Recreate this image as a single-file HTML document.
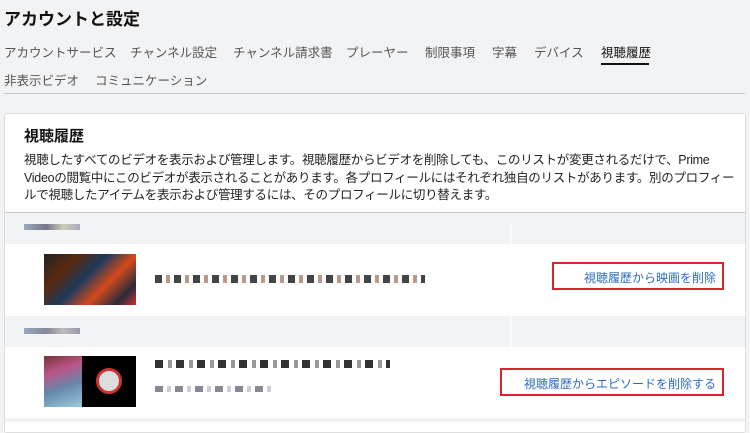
<!DOCTYPE html>
<html><head><meta charset="utf-8"><style>
*{margin:0;padding:0;box-sizing:border-box}
body{width:750px;height:422px;overflow:hidden;background:#f2f3f5;font-family:"Liberation Sans","Noto Sans CJK JP",sans-serif;color:#111;position:relative}
.a{position:absolute;white-space:nowrap}
.tab{font-size:12.5px;color:#555;top:42px}
.tab2{top:70px}
.blk{position:absolute;height:9px}
</style></head><body>
<div class="a" style="left:4px;top:5px;font-size:17px;font-weight:bold">アカウントと設定</div>
<div class="a tab" style="left:4px">アカウントサービス</div>
<div class="a tab" style="left:130px">チャンネル設定</div>
<div class="a tab" style="left:233px">チャンネル請求書</div>
<div class="a tab" style="left:346px">プレーヤー</div>
<div class="a tab" style="left:425px">制限事項</div>
<div class="a tab" style="left:492px">字幕</div>
<div class="a tab" style="left:534px">デバイス</div>
<div class="a tab" style="left:601px;color:#111">視聴履歴</div>
<div class="a" style="left:601px;top:63px;width:48px;height:2px;background:#111"></div>
<div class="a tab tab2" style="left:4px">非表示ビデオ</div>
<div class="a tab tab2" style="left:95px">コミュニケーション</div>
<div class="a" style="left:4px;top:93px;width:741px;height:1px;background:#ccc"></div>

<div class="a" style="left:4px;top:113px;width:742px;height:320px;background:#fff;border:1px solid #ddd;border-radius:3px"></div>
<div class="a" style="left:24px;top:125px;font-size:15px;font-weight:bold">視聴履歴</div>
<div class="a" style="left:24px;top:152px;font-size:12.5px;line-height:17.5px;color:#222;letter-spacing:-0.3px">視聴したすべてのビデオを表示および管理します。視聴履歴からビデオを削除しても、このリストが変更されるだけで、Prime<br>Videoの閲覧中にこのビデオが表示されることがあります。各プロフィールにはそれぞれ独自のリストがあります。別のプロフィー<br>ルで視聴したアイテムを表示および管理するには、そのプロフィールに切り替えます。</div>

<div class="a" style="left:5px;top:212px;width:740px;height:1px;background:#ccc"></div>
<div class="a" style="left:5px;top:213px;width:740px;height:31px;background:#f2f3f5"></div>
<div class="a" style="left:510px;top:223px;width:2px;height:21px;background:#fafafa"></div>
<div class="blk" style="left:24px;top:224px;width:56px;height:6px;background:linear-gradient(90deg,#9ab 0,#778 40%,#ccb 70%,#aab)"></div>
<div class="a" style="left:5px;top:316px;width:740px;height:31px;background:#f2f3f5"></div>
<div class="a" style="left:510px;top:316px;width:2px;height:31px;background:#fafafa"></div>
<div class="blk" style="left:24px;top:328px;width:56px;height:6px;background:linear-gradient(90deg,#9ab 0,#889 40%,#bbb 70%,#99a)"></div>
<div class="a" style="left:5px;top:418px;width:740px;height:4px;background:#f2f3f5"></div>

<div class="a" style="left:44px;top:254px;width:92px;height:51px;background:linear-gradient(135deg,#222 0,#5a2a10 25%,#1d3a5a 45%,#d44a1c 65%,#2a2a3a 85%,#c33 100%)"></div>
<div class="blk" style="left:155px;top:275px;width:270px;height:8px;background:repeating-linear-gradient(90deg,#444 0 7px,#fff 7px 11px,#b98 11px 15px,#fff 15px 19px)"></div>
<div class="a" style="left:552px;top:262px;width:172px;height:28px;border:2px solid #d9232e"></div>
<div class="a" style="left:552px;top:269px;width:164px;text-align:right;font-size:12px;color:#2e6cc0">視聴履歴から映画を削除</div>

<div class="a" style="left:44px;top:356px;width:38px;height:51px;background:linear-gradient(160deg,#733 0,#b58 30%,#68a 60%,#9cd 100%)"></div>
<div class="a" style="left:82px;top:356px;width:54px;height:51px;background:#000"><div style="position:absolute;left:14px;top:12px;width:26px;height:26px;border-radius:50%;background:#ddd;border:3px solid #c33"></div></div>
<div class="blk" style="left:155px;top:360px;width:235px;height:8px;background:repeating-linear-gradient(90deg,#333 0 8px,#fff 8px 13px,#999 13px 17px,#fff 17px 21px)"></div>
<div class="blk" style="left:155px;top:386px;width:120px;height:6px;background:repeating-linear-gradient(90deg,#889 0 8px,#fff 8px 12px,#ccd 12px 16px,#fff 16px 20px)"></div>
<div class="a" style="left:500px;top:368px;width:224px;height:28px;border:2px solid #d9232e"></div>
<div class="a" style="left:500px;top:375px;width:216px;text-align:right;font-size:12px;color:#2e6cc0">視聴履歴からエピソードを削除する</div>
</body></html>
